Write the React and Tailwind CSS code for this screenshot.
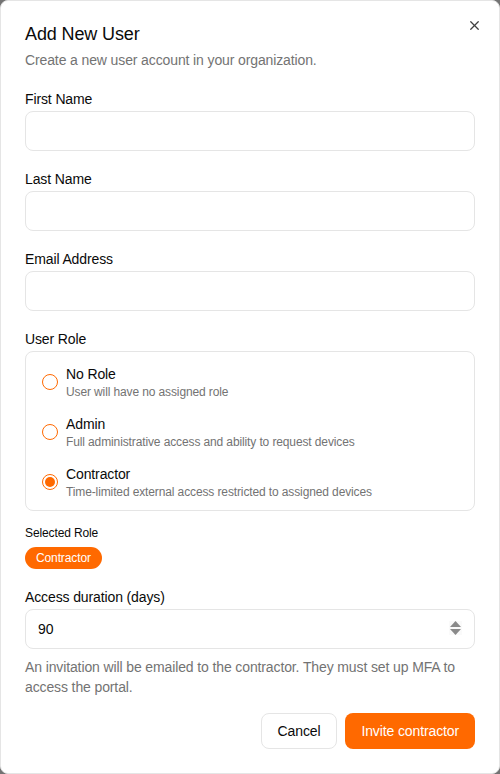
import React, { useState } from "react";
import { X } from "lucide-react";

const roles = [
  { id: "none", name: "No Role", desc: "User will have no assigned role" },
  { id: "admin", name: "Admin", desc: "Full administrative access and ability to request devices" },
  { id: "contractor", name: "Contractor", desc: "Time-limited external access restricted to assigned devices" },
];

function Field({ label, children }) {
  return (
    <div className="flex flex-col gap-0.5">
      <label className="text-sm leading-5 text-neutral-950">{label}</label>
      {children}
    </div>
  );
}

export default function App() {
  const [role, setRole] = useState("contractor");
  const [days, setDays] = useState("90");
  const selected = roles.find((r) => r.id === role);

  return (
    <div
      className="h-[774px] w-[500px] bg-neutral-500 tracking-[-0.12px]"
      style={{ fontFamily: '"Liberation Sans", Arial, sans-serif' }}
    >
      <div className="relative flex h-full w-full flex-col rounded-lg border border-neutral-200 bg-white px-6 pt-[19px] pb-6">
        <button className="absolute right-[17px] top-[17px] text-neutral-700">
          <X size={15} strokeWidth={2} />
        </button>

        <h2 className="text-lg leading-7 text-neutral-950">Add New User</h2>
        <p className="mt-0.5 text-sm leading-5 text-neutral-500">
          Create a new user account in your organization.
        </p>

        <div className="mt-[19px] flex flex-col gap-[18px]">
          <Field label="First Name">
            <input className="h-10 w-full rounded-lg border border-neutral-200 px-3 text-sm outline-none" />
          </Field>
          <Field label="Last Name">
            <input className="h-10 w-full rounded-lg border border-neutral-200 px-3 text-sm outline-none" />
          </Field>
          <Field label="Email Address">
            <input className="h-10 w-full rounded-lg border border-neutral-200 px-3 text-sm outline-none" />
          </Field>
          <Field label="User Role">
            <div className="flex flex-col gap-[14px] rounded-lg border border-neutral-200 px-4 pt-3 pb-[10px]">
              {roles.map((r) => (
                <button
                  key={r.id}
                  onClick={() => setRole(r.id)}
                  className="flex items-center gap-2 text-left"
                >
                  <span className="flex h-4 w-4 shrink-0 items-center justify-center rounded-full border border-orange-500">
                    {role === r.id && <span className="h-2.5 w-2.5 rounded-full bg-orange-500" />}
                  </span>
                  <span className="flex flex-col">
                    <span className="text-sm leading-5 text-neutral-950">{r.name}</span>
                    <span className="text-xs leading-4 text-neutral-500">{r.desc}</span>
                  </span>
                </button>
              ))}
            </div>
          </Field>
        </div>

        <div className="mt-[14px] text-xs leading-4 text-neutral-950">Selected Role</div>
        <div className="mt-[6px] flex">
          <span className="rounded-full bg-orange-500 px-[11px] py-[3px] text-xs leading-4 text-white">
            {selected.name}
          </span>
        </div>

        <div className="mt-[18px]">
          <Field label="Access duration (days)">
            <div className="relative">
              <input
                value={days}
                onChange={(e) => setDays(e.target.value)}
                className="h-10 w-full rounded-lg border border-neutral-200 px-3 text-sm text-neutral-950 outline-none"
              />
              <span className="absolute right-[13px] top-[12px] flex flex-col items-center gap-[2px] bg-neutral-50 px-[1px]">
                <svg width="11" height="6" viewBox="0 0 11 6"><path d="M5.5 0L11 6H0z" fill="#8a8a8a" /></svg>
                <svg width="11" height="6" viewBox="0 0 11 6"><path d="M0 0h11L5.5 6z" fill="#8a8a8a" /></svg>
              </span>
            </div>
          </Field>
        </div>

        <p className="mt-2 text-sm leading-5 text-neutral-500">
          An invitation will be emailed to the contractor. They must set up MFA to access the portal.
        </p>

        <div className="mt-4 flex justify-end gap-2">
          <button className="h-9 rounded-lg border border-neutral-200 bg-white px-4 text-sm text-neutral-950">
            Cancel
          </button>
          <button className="h-9 rounded-lg bg-orange-500 px-4 text-sm text-white">
            Invite contractor
          </button>
        </div>
      </div>
    </div>
  );
}
